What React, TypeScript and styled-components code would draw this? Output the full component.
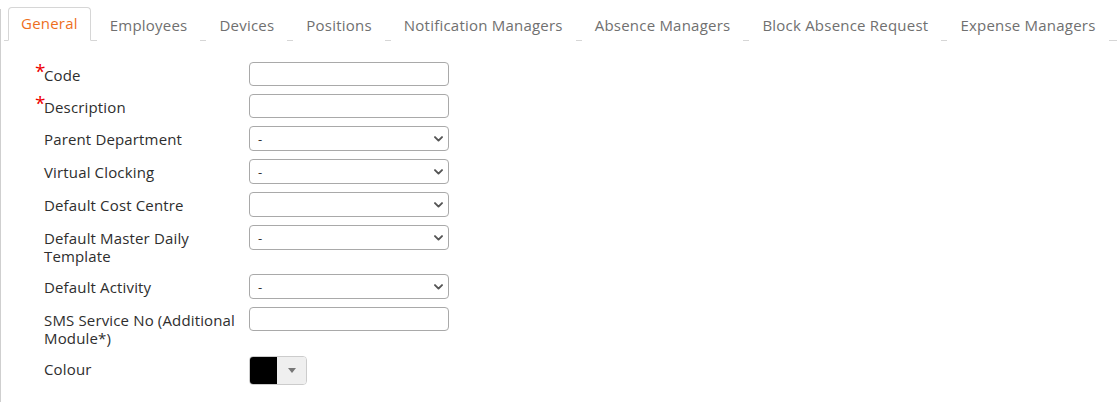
import styled, { createGlobalStyle } from "styled-components";

const GlobalStyle = createGlobalStyle`
  html, body {
    margin: 0;
    padding: 0;
    background: #fff;
  }
  body {
    font-family: "Open Sans", "Liberation Sans", sans-serif;
    font-size: 15px;
    color: #333;
  }
`;

const tabs = [
  "General",
  "Employees",
  "Devices",
  "Positions",
  "Notification Managers",
  "Absence Managers",
  "Block Absence Request",
  "Expense Managers",
];

type Field =
  | { label: string; required?: boolean; kind: "text" }
  | { label: string; required?: boolean; kind: "select"; value: string }
  | { label: string; kind: "colour" };

const fields: Field[] = [
  { label: "Code", required: true, kind: "text" },
  { label: "Description", required: true, kind: "text" },
  { label: "Parent Department", kind: "select", value: "-" },
  { label: "Virtual Clocking", kind: "select", value: "-" },
  { label: "Default Cost Centre", kind: "select", value: "" },
  { label: "Default Master Daily Template", kind: "select", value: "-" },
  { label: "Default Activity", kind: "select", value: "-" },
  { label: "SMS Service No (Additional Module*)", kind: "text" },
  { label: "Colour", kind: "colour" },
];

function Chevron() {
  return (
    <svg width="9" height="6" viewBox="0 0 9 6" fill="none">
      <path d="M1 1.1 4.5 4.6 8 1.1" stroke="#555" strokeWidth="1.9" strokeLinecap="round" strokeLinejoin="round" />
    </svg>
  );
}

export default function App() {
  return (
    <>
      <GlobalStyle />
      <Page>
        <TabBar>
          {tabs.map((t, i) => (
            <Tab key={t} $active={i === 0}>
              {t}
            </Tab>
          ))}
        </TabBar>
        <Form>
          {fields.map((f) => (
            <Row key={f.label}>
              <Label>
                <Star>{"required" in f && f.required ? "*" : ""}</Star>
                <LabelText>{f.label}</LabelText>
              </Label>
              {f.kind === "text" && <TextInput type="text" />}
              {f.kind === "select" && (
                <SelectBox>
                  <SelectValue>{f.value}</SelectValue>
                  <Chevron />
                </SelectBox>
              )}
              {f.kind === "colour" && (
                <ColourPicker>
                  <Swatch $colour="#000" />
                  <PickerToggle>
                    <svg width="8" height="5" viewBox="0 0 8 5">
                      <path d="M0 0h8L4 5z" fill="#777" />
                    </svg>
                  </PickerToggle>
                </ColourPicker>
              )}
            </Row>
          ))}
        </Form>
      </Page>
    </>
  );
}

const Page = styled.div`
  margin-top: 9px;
  border-left: 1px solid #cfcfcf;
  min-height: 393px;
`;

const TabBar = styled.div`
  display: flex;
  align-items: flex-end;
  height: 31px;
  padding-left: 4px;
  margin-left: 3px;
  border-bottom: 1px solid #d6d6d6;
`;

const Tab = styled.div<{ $active?: boolean }>`
  box-sizing: border-box;
  height: ${(p) => (p.$active ? "34px" : "31px")};
  margin-bottom: -1px;
  margin-right: 6px;
  padding: 0 12px ${(p) => (p.$active ? "2px" : "1px")};
  display: flex;
  align-items: center;
  font-size: 15px;
  letter-spacing: 0.22px;
  white-space: nowrap;
  color: ${(p) => (p.$active ? "#ee6f1d" : "#707070")};
  background: #fff;
  border: 1px solid ${(p) => (p.$active ? "#d6d6d6" : "transparent")};
  border-bottom-color: ${(p) => (p.$active ? "#fff" : "transparent")};
  border-radius: 4px 4px 0 0;
`;

const Form = styled.div`
  padding: 21px 0 0 34px;
  display: flex;
  flex-direction: column;
  gap: 8px;
`;

const Row = styled.div`
  display: flex;
  align-items: flex-start;
`;

const Label = styled.div`
  display: flex;
  width: 214px;
  padding: 4px 10px 1px 0;
  box-sizing: border-box;
  flex-shrink: 0;
`;

const Star = styled.span`
  width: 9px;
  flex-shrink: 0;
  color: #e00;
  font-size: 19px;
  line-height: 11px;
`;

const LabelText = styled.span`
  font-size: 15px;
  letter-spacing: 0.15px;
  line-height: 18px;
  color: #2e2e2e;
`;

const TextInput = styled.input`
  box-sizing: border-box;
  width: 200px;
  height: 24px;
  margin: 0;
  border: 1px solid #a9a9a9;
  border-radius: 4px;
  padding: 0 8px;
  font: inherit;
  outline: none;
`;

const SelectBox = styled.div`
  box-sizing: border-box;
  width: 200px;
  height: 25px;
  border: 1px solid #a9a9a9;
  border-radius: 4px;
  padding: 0 5px 0 8px;
  display: flex;
  align-items: center;
  justify-content: space-between;
`;

const SelectValue = styled.span`
  font-size: 13px;
  color: #333;
`;

const ColourPicker = styled.div`
  box-sizing: border-box;
  width: 58px;
  height: 29px;
  display: flex;
  border: 1px solid #cccccc;
  border-radius: 4px;
  overflow: hidden;
`;

const Swatch = styled.div<{ $colour: string }>`
  width: 27px;
  background: ${(p) => p.$colour};
`;

const PickerToggle = styled.div`
  flex: 1;
  background: #efefef;
  display: flex;
  align-items: center;
  justify-content: center;
`;
